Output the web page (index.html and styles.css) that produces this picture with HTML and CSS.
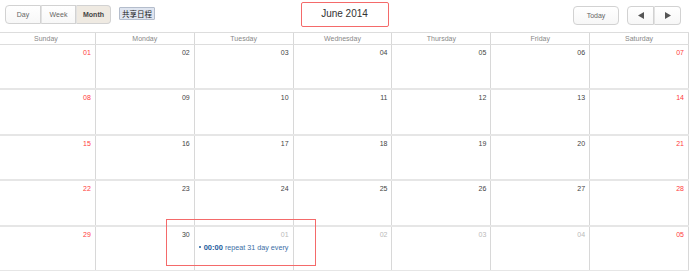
FILE: index.html
```html
<!DOCTYPE html>
<html lang="en">
<head>
    <meta charset="UTF-8">
    <title>Calendar - June 2014</title>
    <link rel="stylesheet" href="styles.css">
</head>
<body>
    <div class="toolbar">
        <div class="tb-left">
            <div class="btn-group">
                <button class="btn btn-view">Day</button><button class="btn btn-view">Week</button><button class="btn btn-view active">Month</button>
            </div>
            <button class="btn-share">共享日程</button>
        </div>
        <div class="tb-center">
            <h2 class="title">June 2014</h2>
        </div>
        <div class="tb-right">
            <button class="btn btn-today">Today</button>
            <div class="btn-group">
                <button class="btn btn-nav"><svg width="6" height="7" viewBox="0 0 6 7"><polygon points="6,0 6,7 0,3.5" fill="#555"/></svg></button><button class="btn btn-nav"><svg width="6" height="7" viewBox="0 0 6 7"><polygon points="0,0 0,7 6,3.5" fill="#555"/></svg></button>
            </div>
        </div>
    </div>

    <div class="cal">
        <div class="cal-head">
            <div>Sunday</div><div>Monday</div><div>Tuesday</div><div>Wednesday</div><div>Thursday</div><div>Friday</div><div>Saturday</div>
        </div>
        <div class="cal-body">
            <div class="week">
                <div class="day weekend"><span class="num">01</span></div>
                <div class="day"><span class="num">02</span></div>
                <div class="day"><span class="num">03</span></div>
                <div class="day"><span class="num">04</span></div>
                <div class="day"><span class="num">05</span></div>
                <div class="day"><span class="num">06</span></div>
                <div class="day weekend"><span class="num">07</span></div>
            </div>
            <div class="week">
                <div class="day weekend"><span class="num">08</span></div>
                <div class="day"><span class="num">09</span></div>
                <div class="day"><span class="num">10</span></div>
                <div class="day"><span class="num">11</span></div>
                <div class="day"><span class="num">12</span></div>
                <div class="day"><span class="num">13</span></div>
                <div class="day weekend"><span class="num">14</span></div>
            </div>
            <div class="week">
                <div class="day weekend"><span class="num">15</span></div>
                <div class="day"><span class="num">16</span></div>
                <div class="day"><span class="num">17</span></div>
                <div class="day"><span class="num">18</span></div>
                <div class="day"><span class="num">19</span></div>
                <div class="day"><span class="num">20</span></div>
                <div class="day weekend"><span class="num">21</span></div>
            </div>
            <div class="week">
                <div class="day weekend"><span class="num">22</span></div>
                <div class="day"><span class="num">23</span></div>
                <div class="day"><span class="num">24</span></div>
                <div class="day"><span class="num">25</span></div>
                <div class="day"><span class="num">26</span></div>
                <div class="day"><span class="num">27</span></div>
                <div class="day weekend"><span class="num">28</span></div>
            </div>
            <div class="week">
                <div class="day weekend"><span class="num">29</span></div>
                <div class="day"><span class="num">30</span></div>
                <div class="day other">
                    <span class="num">01</span>
                    <div class="event"><span class="dot"></span><b>00:00</b> repeat 31 day every</div>
                </div>
                <div class="day other"><span class="num">02</span></div>
                <div class="day other"><span class="num">03</span></div>
                <div class="day other"><span class="num">04</span></div>
                <div class="day weekend"><span class="num">05</span></div>
            </div>
        </div>
        <div class="mark"></div>
    </div>
</body>
</html>
```

FILE: styles.css
```css
body {
    margin: 0;
    width: 689px;
    height: 271px;
    overflow: hidden;
    font-family: "Liberation Sans", Arial, sans-serif;
    color: #333;
    background: #fff;
}
.toolbar {
    display: grid;
    grid-template-columns: 1fr auto 1fr;
    align-items: start;
    height: 32px;
}
.tb-left {
    display: flex;
    align-items: center;
    gap: 8px;
    padding: 5px 0 0 5px;
}
.tb-center {
    padding-top: 2px;
}
.tb-right {
    display: flex;
    justify-content: flex-end;
    gap: 8px;
    padding: 6px 8px 0 0;
}
.btn-group {
    display: flex;
}
.btn {
    font-family: inherit;
    font-size: 7px;
    color: #666;
    background: linear-gradient(#fff, #f7f7f7);
    border: 1px solid #d2d2d2;
    height: 19px;
    padding: 0;
    margin: 0;
    cursor: pointer;
}
.btn-group .btn {
    border-radius: 0;
}
.btn-group .btn + .btn {
    border-left: 1px solid #e2e2e2;
}
.btn-group .btn:first-child {
    border-radius: 4px 0 0 4px;
}
.btn-group .btn:last-child {
    border-radius: 0 4px 4px 0;
}
.btn-view {
    width: 35px;
}
.btn-view:first-child {
    width: 36px;
}
.btn.active {
    background: #efeae2;
    color: #444;
    font-weight: bold;
}
.btn-today {
    width: 46px;
    border-radius: 4px;
}
.btn-nav {
    width: 27px;
    display: flex;
    align-items: center;
    justify-content: center;
}
.btn-share {
    font-family: "Noto Sans CJK SC", sans-serif;
    font-size: 7.5px;
    color: #222;
    background: #dfe5f0;
    border: 1px solid #b4bdcc;
    border-radius: 1px;
    height: 13px;
    padding: 0 2px;
    line-height: 11px;
    margin-top: -3px;
}
.title {
    margin: 0;
    box-sizing: border-box;
    width: 88px;
    height: 25px;
    border: 1.5px solid #f46a6a;
    border-radius: 2px;
    font-size: 10px;
    font-weight: normal;
    color: #333;
    text-align: center;
    line-height: 22px;
}
.cal {
    position: relative;
    margin-left: -3px;
    width: 692px;
}
.cal-head {
    display: grid;
    grid-template-columns: repeat(7, 1fr);
    border-top: 1px solid #ddd;
    border-bottom: 1px solid #ddd;
}
.cal-head div {
    height: 11px;
    font-size: 7px;
    line-height: 11px;
    color: #888;
    text-align: center;
    border-right: 1px solid #d8d8d8;
}
.cal-body {
    display: flex;
    flex-direction: column;
    height: 227px;
}
.week {
    flex: 1;
    display: grid;
    grid-template-columns: repeat(7, 1fr);
    border-bottom: 2px solid #e6e6e6;
}
.day {
    border-right: 1px solid #d8d8d8;
    padding: 3px 4px 0 3px;
    font-size: 7px;
}
.num {
    display: block;
    text-align: right;
    color: #444;
    line-height: 9px;
}
.weekend .num {
    color: #ff3b3b;
}
.other .num {
    color: #b9b9b9;
}
.event {
    display: flex;
    align-items: center;
    gap: 2px;
    margin-top: 4px;
    padding-left: 1px;
    color: #3a6ea5;
    font-size: 7.2px;
    white-space: nowrap;
}
.event b {
    color: #1e5c9e;
    font-size: 7.5px;
}
.dot {
    width: 2px;
    height: 2px;
    border-radius: 50%;
    background: #1e5c9e;
    margin-right: 1px;
}
.mark {
    position: absolute;
    left: 169px;
    top: 187px;
    width: 150px;
    height: 47px;
    box-sizing: border-box;
    border: 1.5px solid #f46a6a;
}
```
